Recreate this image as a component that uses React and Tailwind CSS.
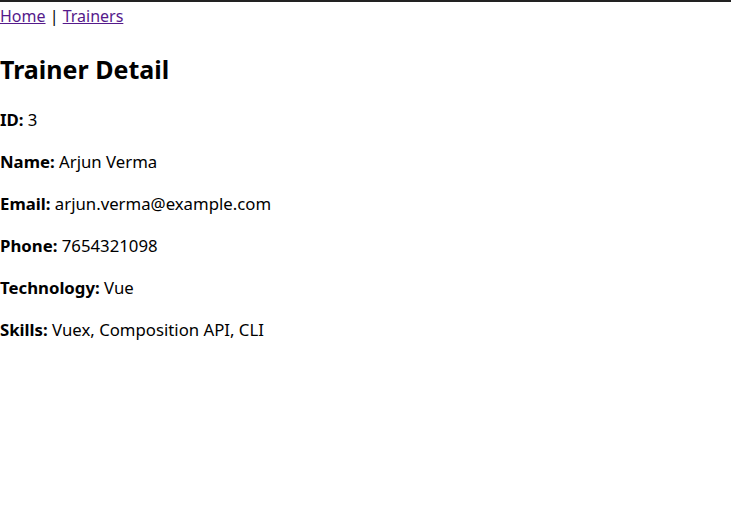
const TRAINER = [
  ["ID", "3"],
  ["Name", "Arjun Verma"],
  ["Email", "arjun.verma@example.com"],
  ["Phone", "7654321098"],
  ["Technology", "Vue"],
  ["Skills", "Vuex, Composition API, CLI"],
];

export default function App() {
  return (
    <div className="min-h-[530px] border-t-2 border-[#222] bg-white text-black text-[16.75px] leading-[26px] font-['Noto_Sans',sans-serif]">
      <nav className="text-[16px] leading-[28px]">
        <a href="#" className="underline text-[#551a8b]">Home</a>
        {" | "}
        <a href="#" className="underline text-[#551a8b]">Trainers</a>
      </nav>
      <h2 className="text-[25px] leading-[38px] font-bold mt-5 mb-[19px]">Trainer Detail</h2>
      {TRAINER.map(([label, value]) => (
        <p key={label} className="my-4">
          <strong className="font-bold">{label}:</strong> {value}
        </p>
      ))}
    </div>
  );
}
